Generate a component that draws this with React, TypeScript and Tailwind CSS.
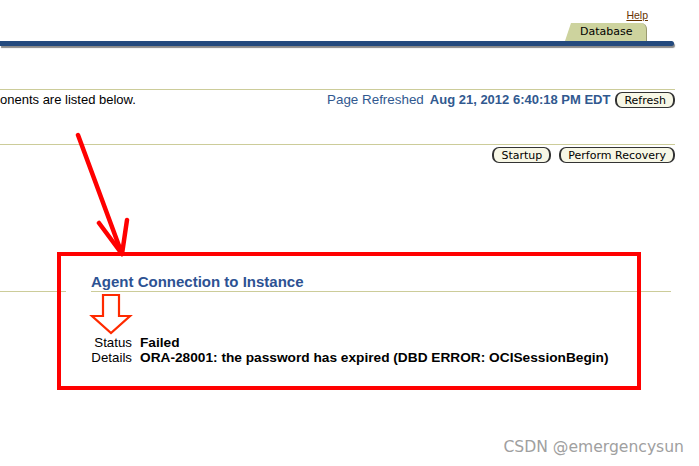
import React from "react";

function Btn({ children }: { children: React.ReactNode }) {
  return (
    <div className="h-[16px] px-[7px] flex items-center rounded-[7px] border border-[#333333] border-l-[2px] border-r-[2px] bg-[#f7f7e6] text-[11px] leading-none text-black font-['DejaVu_Sans',sans-serif]">
      {children}
    </div>
  );
}

export default function App() {
  return (
    <div className="relative w-[699px] h-[466px] bg-white overflow-hidden font-['Liberation_Sans',Arial,sans-serif] text-black">
      {/* header */}
      <div className="h-[41px] flex flex-col items-end pr-[51px]">
        <a className="mt-[9px] h-[13px] leading-[13px] text-[10.5px] text-[#663300] underline">Help</a>
        <div className="mt-[1px] mr-[1px] w-[82px] h-[18px] relative">
          <div className="absolute inset-0 bg-[#cdd39e] rounded-tr-[6px] border-r border-[#9a9a70] [clip-path:polygon(6px_0,100%_0,100%_100%,0_100%)]" />
          <div className="relative h-full flex items-center pl-[15px] pt-[1px] text-[11px] font-['DejaVu_Sans',sans-serif]">Database</div>
        </div>
      </div>
      <div className="w-[674px] h-[5px] bg-[#244a7e] rounded-r-full shadow-[1px_2px_1px_#8a8a8a]" />

      <div className="mt-[43px] w-[675px] h-px bg-[#cccc99]" />
      <div className="w-[675px] h-[20px] flex items-center justify-between text-[13px]">
        <span>onents are listed below.</span>
        <div className="flex items-center">
          <span className="text-[#31598f] text-[13.4px]">Page Refreshed</span>
          <span className="ml-[6px] font-bold text-[#31598f]">Aug 21, 2012 6:40:18 PM EDT</span>
          <div className="ml-[5px]">
            <Btn>Refresh</Btn>
          </div>
        </div>
      </div>

      <div className="mt-[34px] w-[675px] h-px bg-[#cccc99]" />
      <div className="mt-[2px] w-[675px] flex justify-end gap-[8px]">
        <Btn>Startup</Btn>
        <Btn>Perform Recovery</Btn>
      </div>

      <div className="mt-[111px] pl-[91px] h-[16px] leading-[16px] text-[15px] font-bold text-[#2d5293]">
        Agent Connection to Instance
      </div>
      <div className="mt-[1px] flex h-px">
        <div className="w-[66px] h-px bg-[#cccc99]" />
        <div className="ml-[25px] w-[580px] h-px bg-[#cccc99]" />
      </div>

      <div className="mt-[43px] leading-[15px]">
        <div className="flex items-baseline">
          <div className="w-[132px] text-right text-[13.3px]">Status</div>
          <div className="ml-[8px] font-bold text-[13.7px]">Failed</div>
        </div>
        <div className="flex items-baseline">
          <div className="w-[132px] text-right text-[13.3px]">Details</div>
          <div className="ml-[8px] font-bold text-[13.7px]">ORA-28001: the password has expired (DBD ERROR: OCISessionBegin)</div>
        </div>
      </div>

      {/* annotations */}
      <div className="absolute left-[57px] top-[252px] w-[584px] h-[138px] border-[4px] border-[#ff0000] pointer-events-none" />
      <svg className="absolute left-0 top-0 pointer-events-none" width="699" height="466" viewBox="0 0 699 466">
        <g stroke="#ff0000" strokeWidth="4.5" strokeLinecap="round" fill="none">
          <line x1="78" y1="135" x2="122" y2="254" />
          <line x1="99" y1="223" x2="122" y2="254" />
          <line x1="127" y1="220" x2="122" y2="254" />
        </g>
        <polygon
          points="103,295 119,295 119,316 130,316 111,333 92,316 103,316"
          fill="none"
          stroke="#ff2a00"
          strokeWidth="2.2"
          strokeLinejoin="miter"
        />
      </svg>
      <div className="absolute right-[15px] top-[436px] text-[15.6px] text-[#a0a0a0] font-['DejaVu_Sans',sans-serif]">
        CSDN @emergencysun
      </div>
    </div>
  );
}
